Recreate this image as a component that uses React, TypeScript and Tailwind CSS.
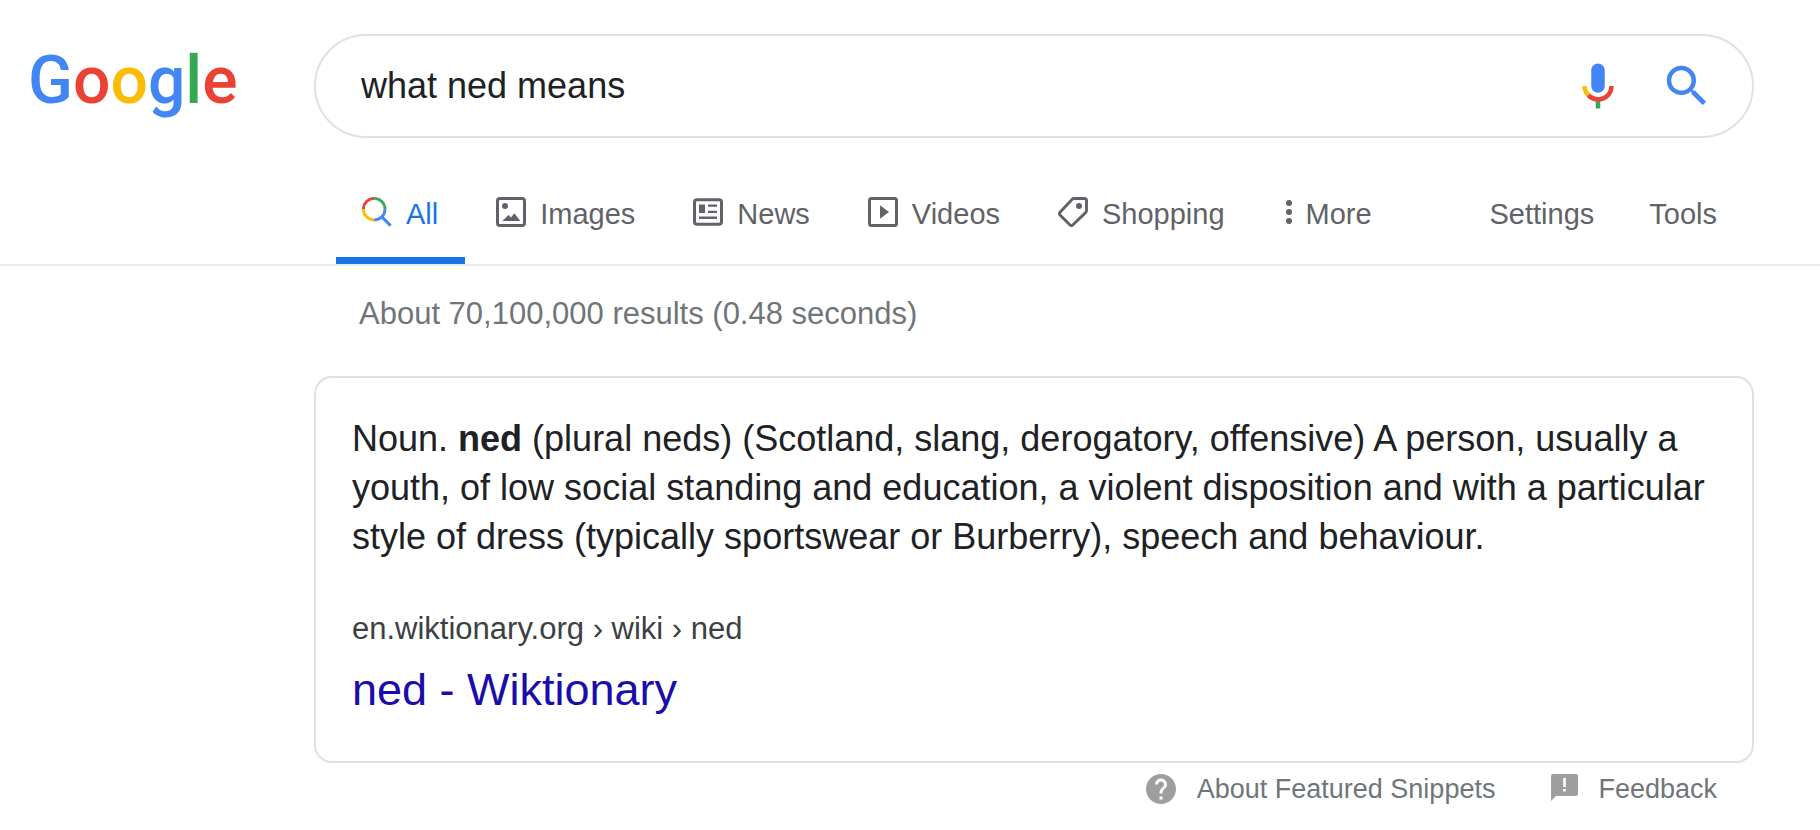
import React from "react";

function MicIcon() {
  return (
    <svg viewBox="0 0 24 24" className="size-[54px]" aria-hidden="true">
      <path fill="#4285f4" d="m12 15c1.66 0 3-1.31 3-2.97v-7.02c0-1.66-1.34-3.01-3-3.01s-3 1.34-3 3.01v7.02c0 1.66 1.34 2.97 3 2.97z" />
      <path fill="#34a853" d="m11 18.08h2v3.92h-2z" />
      <path fill="#fbbc05" d="m7.05 16.87c-1.27-1.33-2.05-2.83-2.05-4.87h2c0 1.45 0.56 2.42 1.47 3.38v0.32l-1.15 1.18z" />
      <path fill="#ea4335" d="m12 16.93a4.97 5.25 0 0 1 -3.54 -1.55l-1.41 1.49c1.26 1.34 3.02 2.13 4.95 2.13 3.87 0 6.99-2.92 6.99-7h-1.99c0 2.92-2.24 4.93-5 4.93z" />
    </svg>
  );
}

function SearchIcon() {
  return (
    <svg viewBox="0 0 24 24" className="size-[54px]" fill="#4285f4" aria-hidden="true">
      <path d="M15.5 14h-.79l-.28-.27A6.471 6.471 0 0 0 16 9.5 6.5 6.5 0 1 0 9.5 16c1.61 0 3.09-.59 4.23-1.57l.27.28v.79l5 4.99L20.49 19l-4.99-5zm-6 0C7.01 14 5 11.99 5 9.5S7.01 5 9.5 5 14 7.01 14 9.5 11.99 14 9.5 14z" />
    </svg>
  );
}

function AllIcon() {
  return (
    <svg viewBox="0 0 30 30" className="size-[30px]" fill="none" strokeWidth="2.9" aria-hidden="true">
      <path stroke="#ea4335" d="M1.4 12.2A10.8 10.8 0 0 1 12.2 1.4" />
      <path stroke="#34a853" d="M12.2 1.4A10.8 10.8 0 0 1 23 12.2" />
      <path stroke="#fbbc05" d="M12.2 23A10.8 10.8 0 0 1 1.4 12.2" />
      <path stroke="#4285f4" d="M23 12.2A10.8 10.8 0 0 1 12.2 23M19.6 19.6L28.6 28.6" />
    </svg>
  );
}

function ImagesIcon() {
  return (
    <svg viewBox="0 0 30 30" className="size-[30px]" aria-hidden="true">
      <rect x="1.5" y="1.5" width="27" height="27" rx="2.5" fill="none" stroke="currentColor" strokeWidth="3" />
      <circle cx="9" cy="9" r="3" fill="currentColor" />
      <path fill="currentColor" d="M6.3 24L12.5 18L15 20.5L18.3 16.3L24.3 24z" />
    </svg>
  );
}

function NewsIcon() {
  return (
    <svg viewBox="0 0 30 30" className="size-[30px]" aria-hidden="true">
      <rect x="1.5" y="2.8" width="27" height="24.4" rx="2.5" fill="none" stroke="currentColor" strokeWidth="3" />
      <path fill="currentColor" d="M6 7.5h6v8.5H6zM15 7.5h9v2.3h-9zM15 13.7h9v2.3h-9zM6 19.4h18v2.6H6z" />
    </svg>
  );
}

function VideosIcon() {
  return (
    <svg viewBox="0 0 30 30" className="size-[30px]" aria-hidden="true">
      <rect x="1.5" y="1.5" width="27" height="27" rx="2" fill="none" stroke="currentColor" strokeWidth="3" />
      <path fill="currentColor" d="M12 8.3L21 15L12 21.7z" />
    </svg>
  );
}

function ShoppingIcon() {
  return (
    <svg viewBox="0 0 30 30" className="size-[30px]" aria-hidden="true">
      <path
        fill="none"
        stroke="currentColor"
        strokeWidth="2.9"
        strokeLinejoin="round"
        d="M15.8 1.5H26.4Q28.5 1.5 28.5 3.6V13.4Q28.5 14.6 27.6 15.6L15 27.8Q13.4 29 11.8 27.8L2 18Q0.9 16.6 2 15.2L14 2.4Q14.8 1.5 15.8 1.5z"
      />
      <circle cx="21" cy="9" r="3" fill="currentColor" />
    </svg>
  );
}

function MoreIcon() {
  return (
    <svg viewBox="0 0 6 30" className="h-[30px] w-[6px]" fill="currentColor" aria-hidden="true">
      <circle cx="3" cy="6" r="3" />
      <circle cx="3" cy="15" r="3" />
      <circle cx="3" cy="24" r="3" />
    </svg>
  );
}

function HelpIcon() {
  return (
    <svg viewBox="2 2 20 20" className="size-[30px]" fill="#9e9e9e" aria-hidden="true">
      <path d="M12 2C6.48 2 2 6.48 2 12s4.48 10 10 10 10-4.48 10-10S17.52 2 12 2zm1 17h-2v-2h2v2zm2.07-7.75l-.9.92C13.45 12.9 13 13.5 13 15h-2v-.5c0-1.1.45-2.1 1.17-2.83l1.24-1.26c.37-.36.59-.86.59-1.41 0-1.1-.9-2-2-2s-2 .9-2 2H8c0-2.21 1.79-4 4-4s4 1.79 4 4c0 .88-.36 1.68-.93 2.25z" />
    </svg>
  );
}

function FeedbackIcon() {
  return (
    <svg viewBox="0 0 27 30" className="h-[30px] w-[27px]" aria-hidden="true">
      <path fill="#9e9e9e" d="M2 0H25Q27 0 27 2V20Q27 22 25 22H5L0 27V2Q0 0 2 0z" />
      <path fill="#fff" d="M12.2 4h2.6v9h-2.6zM12.2 15h2.6v2.6h-2.6z" />
    </svg>
  );
}

const tabs = [
  { label: "All", Icon: AllIcon, active: true },
  { label: "Images", Icon: ImagesIcon, active: false },
  { label: "News", Icon: NewsIcon, active: false },
  { label: "Videos", Icon: VideosIcon, active: false },
  { label: "Shopping", Icon: ShoppingIcon, active: false },
];

function Logo() {
  return (
    <a href="#home" className="flex h-[104px] w-[314px] shrink-0 items-center pb-[10px] pl-7 font-['Roboto',sans-serif] text-[66px] leading-none font-medium">
      <span className="text-[#4285f4]">G</span>
      <span className="text-[#ea4335]">o</span>
      <span className="text-[#fbbc05]">o</span>
      <span className="text-[#4285f4]">g</span>
      <span className="text-[#34a853]">l</span>
      <span className="text-[#ea4335]">e</span>
    </a>
  );
}

export default function App() {
  return (
    <div className="min-h-screen bg-white pb-5 font-['Liberation_Sans',Arial,sans-serif] text-[#202124]">
      <header className="border-b-2 border-[#ebebeb]">
        <div className="flex pt-[34px] pr-[66px]">
          <Logo />
          <form role="search" onSubmit={(e) => e.preventDefault()} className="flex h-[104px] min-w-0 flex-1 items-center rounded-full border-2 border-[#dfe1e5] pr-[38px] pl-[45px]">
            <input aria-label="Search" type="text" defaultValue="what ned means" className="min-w-0 flex-1 bg-transparent text-[36px] leading-[44px] outline-none" />
            <button type="button" aria-label="Search by voice" className="mr-[35px]">
              <MicIcon />
            </button>
            <button type="submit" aria-label="Search">
              <SearchIcon />
            </button>
          </form>
        </div>
        <div className="mt-10 flex items-stretch justify-between pr-[103px] pl-[336px] text-[29px] leading-[34px] text-[#5f6368]">
          <nav aria-label="Search categories" className="flex gap-[5px]">
            {tabs.map(({ label, Icon, active }) => (
              <a
                key={label}
                href={"#" + label.toLowerCase()}
                aria-current={active ? "page" : undefined}
                className={
                  active
                    ? "flex h-[86px] items-start gap-[14px] border-b-[7px] border-[#1a73e8] pt-[19px] pr-[27px] pl-[26px] text-[#1a73e8]"
                    : "flex h-[86px] items-start gap-[14px] pt-[19px] pr-[27px] pl-[26px]"
                }
              >
                <Icon />
                <span>{label}</span>
              </a>
            ))}
            <button type="button" className="flex h-[86px] items-start gap-[14px] pt-[19px] pr-[27px] pl-[29px]">
              <MoreIcon />
              <span>More</span>
            </button>
          </nav>
          <div className="flex items-start gap-[55px] pt-[19px]">
            <button type="button">Settings</button>
            <button type="button">Tools</button>
          </div>
        </div>
      </header>

      <main className="pr-[66px] pl-[314px]">
        <p className="mt-[30px] pl-[45px] text-[31px] leading-[36px] text-[#70757a]">About 70,100,000 results (0.48 seconds)</p>
        <section className="mt-11 rounded-[18px] border-2 border-[#dfe1e5] px-9 pt-[36px] pb-[42px]">
          <p className="text-[36px] leading-[49px]">
            Noun. <b>ned</b> (plural neds) (Scotland, slang, derogatory, offensive) A person, usually a youth, of low social standing and education, a violent disposition and with a particular style of dress (typically sportswear or Burberry), speech and behaviour.
          </p>
          <a href="#ned" className="mt-12 block">
            <cite className="block text-[31px] leading-[40px] text-[#3c4043] not-italic">en.wiktionary.org › wiki › ned</cite>
            <h3 className="mt-3 text-[45px] leading-[58px] text-[#1a0dab]">ned - Wiktionary</h3>
          </a>
        </section>
        <footer className="mt-[9px] flex justify-end gap-[56px] pr-[37px] text-[27px] leading-[34px] text-[#70757a]">
          <a href="#snippets" className="flex items-center gap-[21px]">
            <HelpIcon />
            <span>About Featured Snippets</span>
          </a>
          <a href="#feedback" className="flex items-center gap-[20px]">
            <FeedbackIcon />
            <span>Feedback</span>
          </a>
        </footer>
      </main>
    </div>
  );
}
